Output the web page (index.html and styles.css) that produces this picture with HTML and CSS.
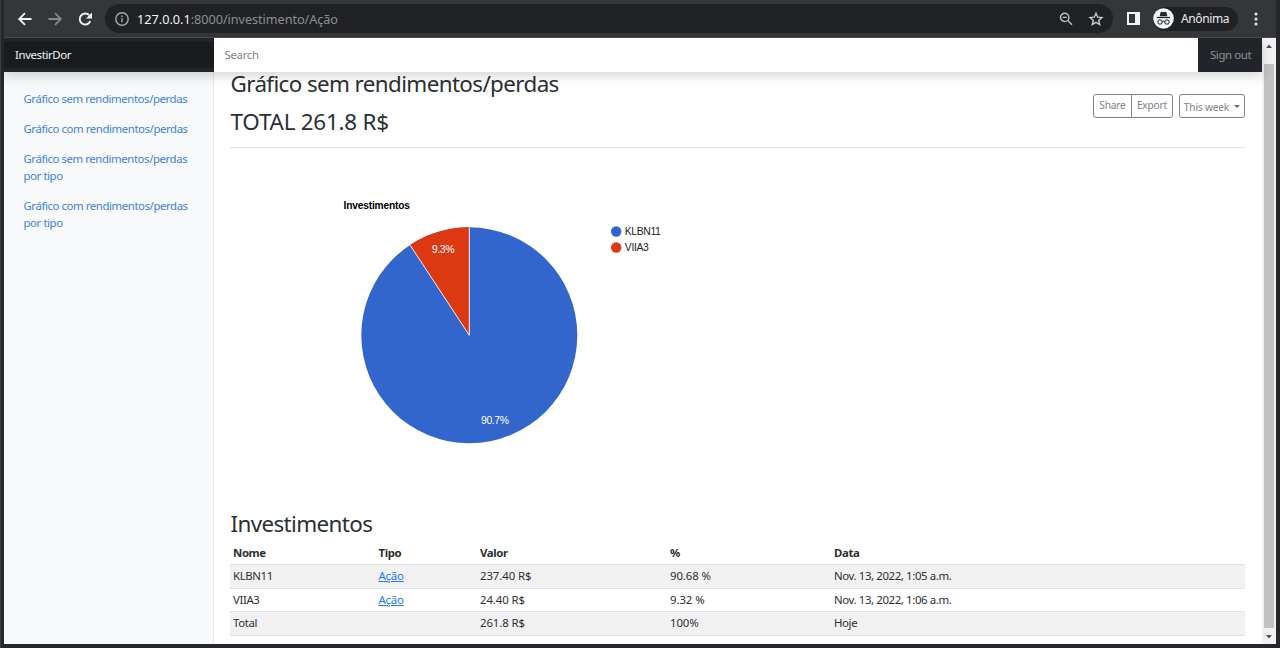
FILE: index.html
```html
<!DOCTYPE html>
<html lang="pt-br">
<head>
<meta charset="utf-8">
<title>InvestirDor</title>
<link rel="stylesheet" href="styles.css">
</head>
<body>
<div class="window">
  <div class="toolbar">
    <svg class="nav-icons" width="101" height="38" viewBox="0 0 101 38" fill="none">
      <path d="M27.500 19H16M21 13.200 15.200 19 21 24.800" stroke="#f1f3f4" stroke-width="1.800"/>
      <path d="M44.500 19H56M51 13.200 56.800 19 51 24.800" stroke="#85878a" stroke-width="1.800"/>
      <path d="M86.300 21.200A5.500 5.500 0 1 1 85.200 15.200" stroke="#f1f3f4" stroke-width="1.900"/>
      <path d="M88 12.400v6h-6z" fill="#f1f3f4"/>
    </svg>
    <div class="address">
      <svg class="info" width="16" height="16" viewBox="0 0 16 16" fill="none" stroke="#a6a9ad" stroke-width="1.400"><circle cx="8" cy="8" r="6.200"/><path d="M8 7.200v4M8 4.600v1.600"/></svg>
      <span class="url"><span class="host">127.0.0.1</span>:8000/investimento/Ação</span>
      <svg class="lens" width="16" height="16" viewBox="0 0 16 16" fill="none" stroke="#bfc1c4" stroke-width="1.400"><circle cx="6.700" cy="6.400" r="4.200"/><path d="m9.800 9.500 4.200 4.300M4.600 6.400h4.200"/></svg>
      <svg class="star" width="16" height="16" viewBox="0 0 16 16" fill="none" stroke="#c9cbcd" stroke-width="1.400"><path d="m8 2.300 1.700 3.900 4.200.4-3.200 2.800 1 4.200L8 11.400l-3.700 2.200 1-4.200-3.200-2.800 4.200-.4z"/></svg>
    </div>
    <svg class="panel" width="13" height="13" viewBox="0 0 13 13"><path fill="#f1f3f4" fill-rule="evenodd" d="M0 0h13v13H0zM2 2v9h6V2z"/></svg>
    <div class="profile">
      <svg width="21" height="21" viewBox="0 0 21 21"><circle cx="10.500" cy="10.500" r="10.300" fill="#f1f3f4"/><path d="M6.600 8.200 7.700 4.200q.3-.7 1-.4l1.800.5 1.800-.5q.7-.3 1 .4l1.100 4z" fill="#202124"/><path d="M3.800 9.500h13.400" stroke="#202124" stroke-width="1.200"/><g fill="none" stroke="#202124"><circle cx="7" cy="14" r="2.200"/><circle cx="14" cy="14" r="2.200"/><path d="M9.200 13.700q1.300-.8 2.600 0"/></g></svg>
      <span>Anônima</span>
    </div>
    <svg class="dots" width="4" height="14" viewBox="0 0 4 14" fill="#e8eaed"><circle cx="2" cy="2" r="1.500"/><circle cx="2" cy="7" r="1.500"/><circle cx="2" cy="12" r="1.500"/></svg>
  </div>
  <div class="viewport">
    <div class="page">
      <header class="navbar">
        <div class="brand"><span>InvestirDor</span></div>
        <div class="search"><span>Search</span></div>
        <div class="signout"><span>Sign out</span></div>
      </header>
      <div class="body">
        <nav class="sidebar">
          <a>Gráfico sem rendimentos/perdas</a>
          <a>Gráfico com rendimentos/perdas</a>
          <a>Gráfico sem rendimentos/perdas<br>por tipo</a>
          <a>Gráfico com rendimentos/perdas<br>por tipo</a>
        </nav>
        <main class="main">
          <div class="heading">
            <div>
              <h2 class="title">Gráfico sem rendimentos/perdas</h2>
              <h2 class="total">TOTAL 261.8 R$</h2>
            </div>
            <div class="actions">
              <div class="group"><button class="btn share">Share</button><button class="btn export">Export</button></div>
              <button class="btn week">This week<i class="caret"></i></button>
            </div>
          </div>
          <svg class="chart" width="1015" height="360" viewBox="230 148 1015 360">
            <text class="chart-title" x="343.500" y="209" textLength="66.500">Investimentos</text>
            <circle cx="469.300" cy="335.300" r="108" fill="#3366cc"/>
            <path d="M469.300 335.300V227.300A108 108 0 0 0 410 245z" fill="#dc3912"/>
            <path d="M469.300 227.300v108L410 245" fill="none" stroke="#fff" stroke-width=".9"/>
            <text class="slice" x="432" y="253" textLength="22.500">9.3%</text>
            <text class="slice" x="481" y="424" textLength="28">90.7%</text>
            <circle cx="616.200" cy="231.500" r="5.200" fill="#3366cc"/>
            <text class="legend" x="624.800" y="235" textLength="36">KLBN11</text>
            <circle cx="616.200" cy="247.500" r="5.200" fill="#dc3912"/>
            <text class="legend" x="624.800" y="251" textLength="24">VIIA3</text>
          </svg>
          <h2 class="subtitle">Investimentos</h2>
          <table class="table">
            <colgroup><col class="c1"><col class="c2"><col class="c3"><col class="c4"><col></colgroup>
            <thead><tr><th>Nome</th><th>Tipo</th><th>Valor</th><th>%</th><th>Data</th></tr></thead>
            <tbody>
              <tr><td>KLBN11</td><td><a>Ação</a></td><td class="num">237.40 R$</td><td class="num">90.68 %</td><td>Nov. 13, 2022, 1:05 a.m.</td></tr>
              <tr><td>VIIA3</td><td><a>Ação</a></td><td class="num">24.40 R$</td><td class="num">9.32 %</td><td>Nov. 13, 2022, 1:06 a.m.</td></tr>
              <tr><td>Total</td><td></td><td class="num">261.8 R$</td><td class="num">100%</td><td>Hoje</td></tr>
            </tbody>
          </table>
        </main>
      </div>
    </div>
    <div class="scrollbar">
      <svg width="14" height="26" viewBox="0 0 14 26"><path d="M4 10l3-3.500 3 3.500z" fill="#505050"/></svg>
      <div class="thumb"></div>
      <svg width="14" height="16" viewBox="0 0 14 16"><path d="M4 7l3 3.500L10 7z" fill="#505050"/></svg>
    </div>
  </div>
</div>
</body>
</html>
```
FILE: styles.css
```css
* { box-sizing: border-box; }
body { margin: 0; font-family: "Noto Sans", sans-serif; font-size: 11.400px; color: #2b2f33; letter-spacing: -.38px; }
.window { width: 1280px; height: 648px; background: #25272b; border-left: 1px solid #3a3c40; overflow: hidden; display: flex; flex-direction: column; }
.toolbar { height: 38px; flex: none; background: #35363a; border-bottom: 1px solid #4a4b4f; margin-left: 3px; margin-right: 4px; display: flex; align-items: center; }
.nav-icons { margin-right: 1px; flex: none; }
.nav-icons { margin-left: 0; }
.address { width: 1008px; height: 29px; flex: none; border-radius: 15px; background: #202124; display: flex; align-items: center; padding: 0 9px 0 9px; margin-left: -1px; }
.url { margin-left: 7px; font-size: 12.700px; color: #8c8f93; flex: 1; white-space: nowrap; letter-spacing: -.06px; }
.host { color: #f1f3f4; letter-spacing: 0; }
.star { margin-left: 14px; }
.panel { margin-left: 14px; flex: none; }
.profile { margin-left: 13px; width: 85px; height: 24px; border-radius: 12px; background: #202124; color: #e8eaed; display: flex; align-items: center; gap: 7px; font-size: 12px; flex: none; }
.dots { margin-left: 16px; }
.viewport { display: flex; margin: 0 4px 0 3px; height: 606px; }
.page { width: 1258px; background: #fff; display: flex; flex-direction: column; }
.navbar { height: 34px; flex: none; display: flex; align-items: center; position: relative; background: #212529; box-shadow: 0 5px 11px rgba(0,0,0,.15); }
.brand { width: 209.500px; height: 26px; line-height: 25px; padding-left: 11px; background: #191c1f; color: #f4f4f4; }
.search { flex: 1; height: 34px; line-height: 34px; padding-left: 11px; background: #fff; color: #7d8287; letter-spacing: -.3px; }
.signout { width: 64px; line-height: 34px; padding-left: 12px; color: #909294; }
.body { flex: 1; display: flex; min-height: 0; }
.sidebar { width: 210px; background: #f7f9fb; border-right: 1px solid #e8e9ea; padding: 11px 0 0 19.500px; display: flex; flex-direction: column; letter-spacing: -.42px; }
.sidebar a { color: #3f7fe0; line-height: 17px; padding: 6.500px 0; white-space: nowrap; }
.main { width: 1031px; margin-left: 16px; }
h2 { margin: 0; font-weight: 400; font-size: 22.400px; line-height: 26px; white-space: nowrap; letter-spacing: -.61px; padding-left: .5px; }
.heading { width: 1015px; height: 76px; border-bottom: 1px solid #dee2e6; display: flex; justify-content: space-between; }
.title { margin-top: -1px; }
.total { margin-top: 12px; letter-spacing: -.22px; }
.actions { display: flex; gap: 6px; padding-top: 22px; }
.group { display: flex; height: 24px; }
.btn { height: 24px; border: 1px solid #7b8288; background: #fff; color: #7b8288; padding: 0 0 2px; font: 10.200px/20px "Noto Sans", sans-serif; letter-spacing: -.2px; border-radius: 3px; white-space: nowrap; }
.share { width: 39px; border-radius: 3px 0 0 3px; }
.export { width: 42px; margin-left: -1px; border-radius: 0 3px 3px 0; }
.week { width: 66px; padding: 2px 0 0; }
.caret { display: inline-block; border: 3px solid transparent; border-top-color: #62686d; border-bottom: 0; margin-left: 5px; vertical-align: 3px; }
.chart { display: block; font-family: "Liberation Sans", Arial, sans-serif; font-size: 10.400px; letter-spacing: 0; }
.chart-title { font-weight: 700; font-size: 10.200px; fill: #000; }
.slice { fill: #fff; }
.legend { fill: #222; }
.subtitle { margin-top: 3px; }
.table { width: 1015px; margin-top: 4px; border-collapse: collapse; table-layout: fixed; }
.c1 { width: 145.500px; } .c2 { width: 101.500px; } .c3 { width: 190px; } .c4 { width: 164px; }
.table tr { height: 23.500px; }
.table th, .table td { text-align: left; padding: 0 3px; border-bottom: 1px solid #dee2e6; line-height: 22px; white-space: nowrap; }
.table .num { letter-spacing: -.08px; }
.table tbody tr:nth-child(odd) { background: #f1f1f1; }
.table a { color: #2577f5; text-decoration: underline; letter-spacing: -.2px; }
.scrollbar { width: 14px; background: #f1f1f1; display: flex; flex-direction: column; }
.scrollbar svg { flex: none; display: block; }
.thumb { flex: 1; margin: 0 2px; background: #c1c1c1; }
```
